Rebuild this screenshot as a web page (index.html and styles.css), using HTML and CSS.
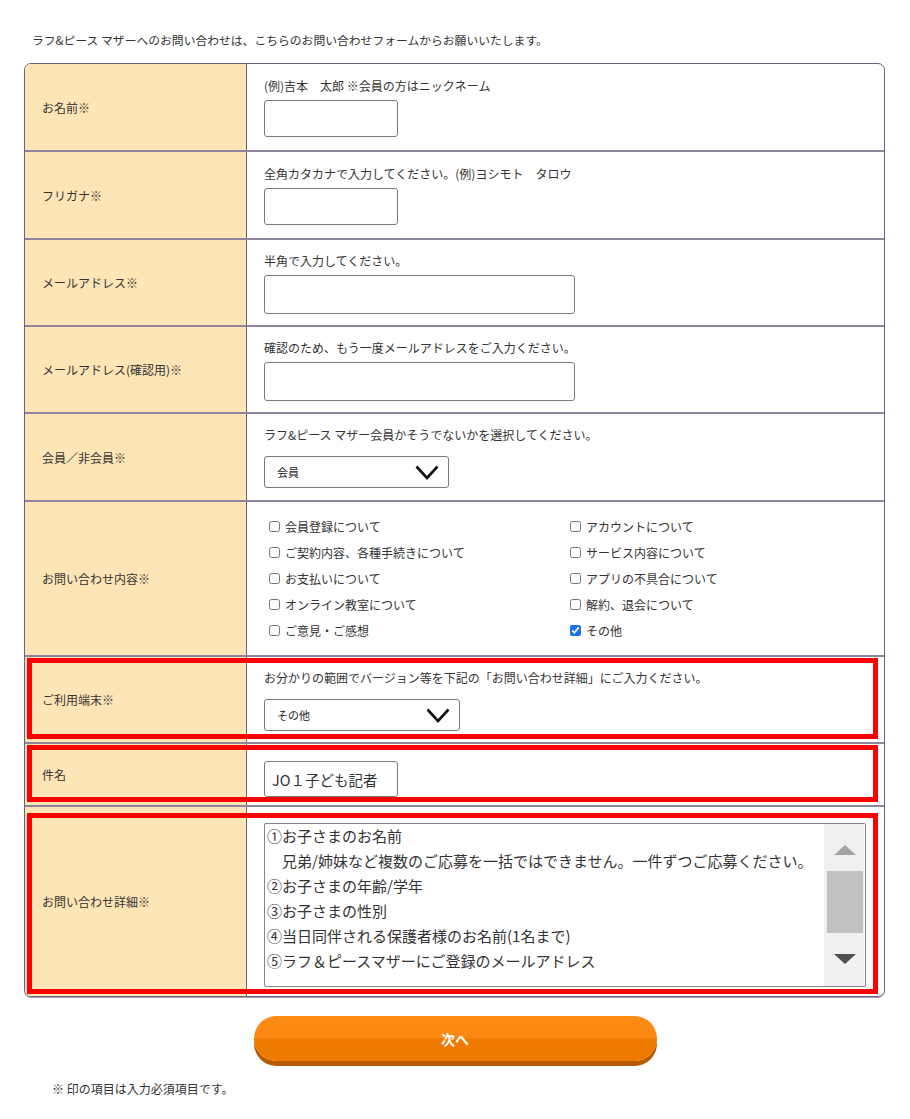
FILE: index.html
```html
<!DOCTYPE html>
<html lang="ja">
<head>
    <meta charset="UTF-8">
    <meta name="viewport" content="width=device-width, initial-scale=1.0">
    <title>お問い合わせ</title>
    <link rel="stylesheet" href="styles.css">
</head>
<body>
    <div class="page">
        <p class="intro">ラフ&amp;ピース マザーへのお問い合わせは、こちらのお問い合わせフォームからお願いいたします。</p>

        <div class="form-table">
            <!-- お名前 -->
            <div class="row row-name">
                <div class="label">お名前※</div>
                <div class="value">
                    <p class="note">(例)吉本　太郎 ※会員の方はニックネーム</p>
                    <input type="text" class="field field-short">
                </div>
            </div>

            <!-- フリガナ -->
            <div class="row row-kana">
                <div class="label">フリガナ※</div>
                <div class="value">
                    <p class="note">全角カタカナで入力してください。(例)ヨシモト　タロウ</p>
                    <input type="text" class="field field-short">
                </div>
            </div>

            <!-- メールアドレス -->
            <div class="row row-mail">
                <div class="label">メールアドレス※</div>
                <div class="value">
                    <p class="note">半角で入力してください。</p>
                    <input type="text" class="field field-long">
                </div>
            </div>

            <div class="row row-mail">
                <div class="label">メールアドレス(確認用)※</div>
                <div class="value">
                    <p class="note">確認のため、もう一度メールアドレスをご入力ください。</p>
                    <input type="text" class="field field-long">
                </div>
            </div>

            <!-- 会員／非会員 -->
            <div class="row row-member">
                <div class="label">会員／非会員※</div>
                <div class="value">
                    <p class="note">ラフ&amp;ピース マザー会員かそうでないかを選択してください。</p>
                    <div class="select-wrap select-member">
                        <select class="select">
                            <option>会員</option>
                            <option>非会員</option>
                        </select>
                        <svg class="chevron" width="24" height="15" viewBox="0 0 24 15"><path d="M1.5 1.5 L12 13 L22.5 1.5" fill="none" stroke="#111" stroke-width="2.6"/></svg>
                    </div>
                </div>
            </div>

            <!-- お問い合わせ内容 -->
            <div class="row row-topics">
                <div class="label">お問い合わせ内容※</div>
                <div class="value">
                    <div class="checks">
                        <label class="check"><input type="checkbox"> 会員登録について</label>
                        <label class="check"><input type="checkbox"> アカウントについて</label>
                        <label class="check"><input type="checkbox"> ご契約内容、各種手続きについて</label>
                        <label class="check"><input type="checkbox"> サービス内容について</label>
                        <label class="check"><input type="checkbox"> お支払いについて</label>
                        <label class="check"><input type="checkbox"> アプリの不具合について</label>
                        <label class="check"><input type="checkbox"> オンライン教室について</label>
                        <label class="check"><input type="checkbox"> 解約、退会について</label>
                        <label class="check"><input type="checkbox"> ご意見・ご感想</label>
                        <label class="check"><input type="checkbox" checked> その他</label>
                    </div>
                </div>
            </div>

            <!-- ご利用端末 -->
            <div class="row row-device marked">
                <div class="label">ご利用端末※</div>
                <div class="value">
                    <p class="note">お分かりの範囲でバージョン等を下記の「お問い合わせ詳細」にご入力ください。</p>
                    <div class="select-wrap select-device">
                        <select class="select">
                            <option>その他</option>
                        </select>
                        <svg class="chevron" width="24" height="15" viewBox="0 0 24 15"><path d="M1.5 1.5 L12 13 L22.5 1.5" fill="none" stroke="#111" stroke-width="2.6"/></svg>
                    </div>
                </div>
            </div>

            <!-- 件名 -->
            <div class="row row-subject marked">
                <div class="label">件名</div>
                <div class="value">
                    <input type="text" class="field field-subject" value="JO１子ども記者">
                </div>
            </div>

            <!-- お問い合わせ詳細 -->
            <div class="row row-detail marked">
                <div class="label">お問い合わせ詳細※</div>
                <div class="value">
                    <div class="textbox">
                        <div class="textbox-text">①お子さまのお名前<br>　兄弟/姉妹など複数のご応募を一括ではできません。一件ずつご応募ください。<br>②お子さまの年齢/学年<br>③お子さまの性別<br>④当日同伴される保護者様のお名前(1名まで)<br>⑤ラフ＆ピースマザーにご登録のメールアドレス</div>
                        <div class="scrollbar">
                            <span class="arrow arrow-up"></span>
                            <span class="thumb"></span>
                            <span class="arrow arrow-down"></span>
                        </div>
                    </div>
                </div>
            </div>
        </div>

        <div class="actions">
            <button class="next-btn">次へ</button>
        </div>

        <p class="footnote">※ 印の項目は入力必須項目です。</p>
    </div>
</body>
</html>
```

FILE: styles.css
```css
body {
    margin: 0;
    font-family: "Noto Sans CJK JP", "Liberation Sans", sans-serif;
    color: #333;
    background: #fff;
}
.page {
    width: 910px;
    padding-top: 31px;
}
.intro {
    margin: 0 0 14px 32px;
    font-size: 11.8px;
    line-height: 18px;
}
.form-table {
    width: 859px;
    margin-left: 24px;
    border: 1px solid #6e5f80;
    border-radius: 7px;
    overflow: hidden;
    box-shadow: 0 1px 0 #a89eb3;
}
.row {
    position: relative;
    display: grid;
    grid-template-columns: 222px 1fr;
    box-sizing: border-box;
    border-top: 2px solid #8e849b;
}
.row:first-child {
    border-top: none;
}
.row-name { height: 86px; }
.row-kana { height: 88px; }
.row-mail { height: 87px; }
.row-member { height: 88px; }
.row-topics { height: 155px; }
.row-device { height: 87px; }
.row-subject { height: 63px; }
.row-detail { height: 191px; }

.label {
    display: flex;
    align-items: center;
    padding-left: 17px;
    background: #fee5b6;
    border-right: 1px solid #6e5f80;
    font-size: 12px;
}
.value {
    display: flex;
    flex-direction: column;
    justify-content: center;
    align-items: flex-start;
    padding-left: 17px;
}
.note {
    margin: 0 0 5px;
    font-size: 12px;
    line-height: 18px;
}
.row-member .note,
.row-device .note {
    margin-bottom: 12px;
}
.field {
    box-sizing: border-box;
    margin: 0;
    border: 1px solid #7a7a7a;
    border-radius: 3px;
    background: #fff;
    font-family: inherit;
}
.field-short {
    width: 134px;
    height: 37px;
}
.field-long {
    width: 311px;
    height: 39px;
}
.row-subject .value {
    padding-top: 9px;
}
.field-subject {
    width: 134px;
    height: 36px;
    padding: 0 0 0 7px;
    font-size: 14.5px;
    color: #333;
}

/* select */
.select-wrap {
    position: relative;
}
.select {
    box-sizing: border-box;
    height: 32px;
    padding: 0 0 0 12px;
    border: 1px solid #7a7a7a;
    border-radius: 3px;
    background: #fff;
    font-family: inherit;
    font-size: 11px;
    color: #222;
    appearance: none;
    -webkit-appearance: none;
}
.select-member .select { width: 185px; }
.select-device .select { width: 196px; }
.chevron {
    position: absolute;
    top: 9px;
    right: 10px;
    pointer-events: none;
}

/* checkboxes */
.checks {
    display: grid;
    grid-template-columns: 301px 280px;
    grid-auto-rows: 25.8px;
}
.check {
    display: flex;
    align-items: center;
    font-size: 12px;
}
.check input {
    width: 11px;
    height: 11px;
    margin: 0 5px 0 5px;
    accent-color: #1a73e8;
}

/* textarea */
.row-detail .value {
    padding-top: 6px;
}
.textbox {
    box-sizing: border-box;
    display: flex;
    width: 602px;
    height: 164px;
    border: 1px solid #858585;
    border-radius: 2px;
    background: #fff;
}
.textbox-text {
    flex: 1;
    padding: 0 0 0 2px;
    margin-top: -1px;
    font-size: 15px;
    line-height: 25px;
    color: #333;
    white-space: nowrap;
    overflow: hidden;
}
.scrollbar {
    position: relative;
    width: 40px;
    margin: 0 1px 0 0;
    background: #f0f0f0;
}
.thumb {
    position: absolute;
    left: 3px;
    right: 1px;
    top: 47px;
    height: 62px;
    background: #c1c1c1;
}
.arrow {
    position: absolute;
    left: 10px;
    width: 0;
    height: 0;
    border-left: 11px solid transparent;
    border-right: 11px solid transparent;
}
.arrow-up {
    top: 21px;
    border-bottom: 10px solid #a3a3a3;
}
.arrow-down {
    bottom: 22px;
    border-top: 10px solid #505050;
}

/* red annotation frames */
.marked::after {
    content: "";
    position: absolute;
    top: 1px;
    left: 2px;
    right: 6px;
    bottom: 3px;
    border: 5px solid #ff0000;
    pointer-events: none;
}
.row-detail.marked::after {
    top: 6px;
    bottom: 2px;
}

/* button */
.actions {
    display: flex;
    justify-content: center;
    margin-top: 19px;
}
.next-btn {
    width: 403px;
    height: 45px;
    border: none;
    border-radius: 23px;
    background: linear-gradient(#fd8c14 0%, #fb8810 48%, #f07b00 52%, #ee7900 100%);
    box-shadow: 0 5px 0 #b65900;
    color: #fff;
    font-family: inherit;
    font-size: 14px;
    font-weight: bold;
    cursor: pointer;
}
.footnote {
    margin: 19px 0 0 52px;
    font-size: 12px;
    line-height: 18px;
}
```
